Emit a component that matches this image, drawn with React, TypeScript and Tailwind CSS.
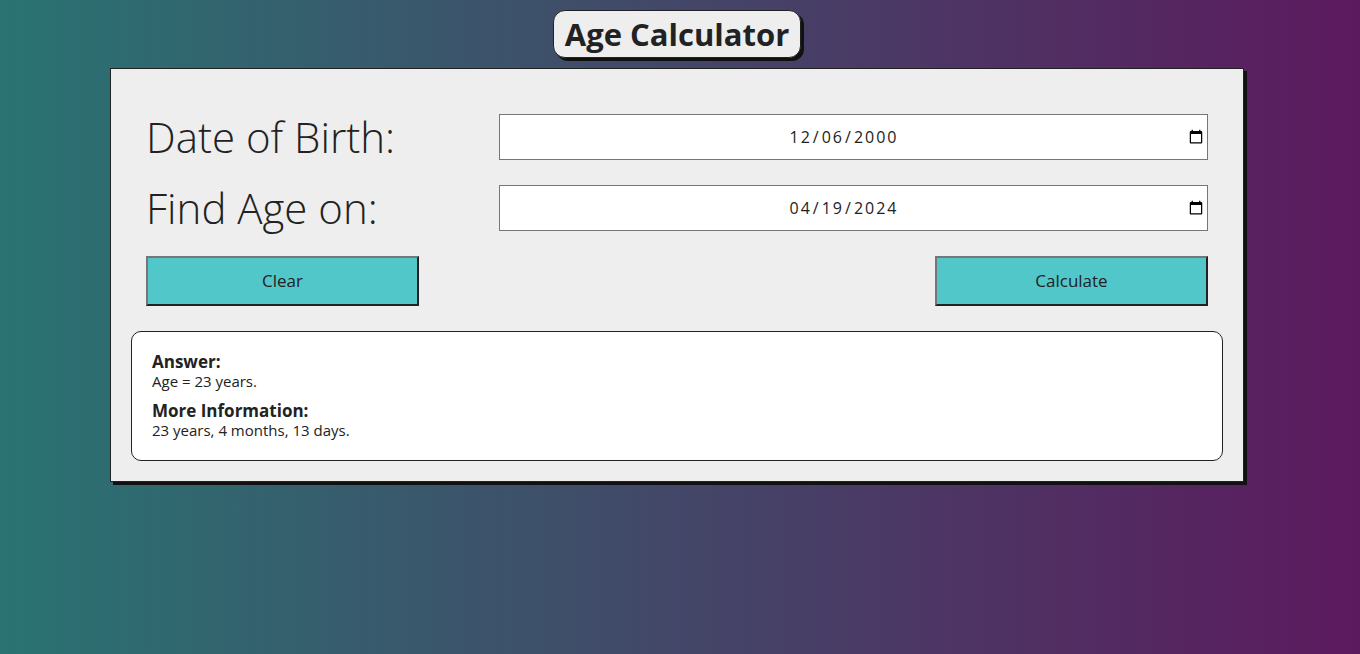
import { useState } from "react";

export default function App() {
  const [dob, setDob] = useState("2000-12-06");
  const [onDate, setOnDate] = useState("2024-04-19");

  return (
    <div className="min-h-[654px] w-full bg-linear-to-r/srgb from-[#2a7372] to-[#5c1a5e] font-['Open_Sans',sans-serif] text-[#222]">
      <div className="flex flex-col items-center pr-[6px] pt-[10px]">
        <h1 className="rounded-[12px] border border-[#222] bg-[#eeeeee] px-[11px] py-[3px] text-[31px] font-bold leading-[40px] shadow-[3px_3px_0_#111]">
          Age Calculator
        </h1>

        <div className="mt-[10px] w-[1134px] border border-[#222] bg-[#eeeeee] px-[20px] pb-[20px] pt-[45px] shadow-[3px_3px_0_#111]">
          <div className="px-[15px]">
            <div className="grid grid-cols-3 items-center gap-y-[25px]">
              <label className="text-[42px] font-light leading-[46px]">Date of Birth:</label>
              <input
                type="date"
                value={dob}
                onChange={e => setDob(e.target.value)}
                className="col-span-2 -ml-px h-[46px] border border-[#767676] bg-white pl-[2px] pr-[1px] text-center text-[16px] tracking-[2px] [&::-webkit-datetime-edit]:flex [&::-webkit-datetime-edit]:justify-center"
              />
              <label className="text-[42px] font-light leading-[46px]">Find Age on:</label>
              <input
                type="date"
                value={onDate}
                onChange={e => setOnDate(e.target.value)}
                className="col-span-2 -ml-px h-[46px] border border-[#767676] bg-white pl-[2px] pr-[1px] text-center text-[16px] tracking-[2px] [&::-webkit-datetime-edit]:flex [&::-webkit-datetime-edit]:justify-center"
              />
            </div>

            <div className="mt-[25px] flex justify-between">
              <button className="h-[50px] w-[273px] border-2 border-b-[#222] border-l-[#767676] border-r-[#222] border-t-[#767676] bg-[#52c7ca] text-[17px]">
                Clear
              </button>
              <button className="h-[50px] w-[273px] border-2 border-b-[#222] border-l-[#767676] border-r-[#222] border-t-[#767676] bg-[#52c7ca] text-[17px]">
                Calculate
              </button>
            </div>
          </div>

          <div className="mt-[25px] rounded-[10px] border border-[#222] bg-white px-[20px] pb-[21px] pt-[20px]">
            <p className="text-[17px] font-bold leading-[20px]">Answer:</p>
            <p className="text-[15px] leading-[18px]">Age = 23 years.</p>
            <p className="mt-[11px] text-[17px] font-bold leading-[20px]">More Information:</p>
            <p className="text-[15px] leading-[18px]">23 years, 4 months, 13 days.</p>
          </div>
        </div>
      </div>
    </div>
  );
}
